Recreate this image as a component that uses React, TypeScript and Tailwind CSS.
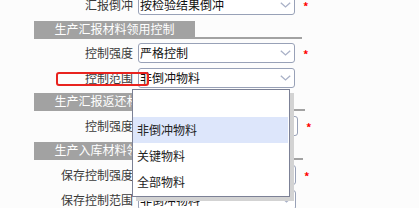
import React from 'react';

type RowProps = {
  label: string;
  value?: string;
  star?: boolean;
  selectWidth?: string;
  starGap?: string;
  className?: string;
};

const Chevron = () => (
  <svg width="11" height="6" viewBox="0 0 11 6" className="mr-[3px] shrink-0">
    <path d="M0.8 0.8 L5.5 5 L10.2 0.8" fill="none" stroke="#a9b1c7" strokeWidth="1.3" />
  </svg>
);

const FieldRow: React.FC<RowProps> = ({ label, value = '', star, selectWidth = 'w-[157px]', starGap = 'ml-[8px]', className = '' }) => (
  <div className={`flex items-center h-[20px] ${className}`}>
    <div className="w-[99px] shrink-0 text-right text-[12px] leading-none text-[#3a3a3a] whitespace-nowrap">{label}</div>
    <div
      className={`ml-[5px] ${selectWidth} h-[20px] shrink-0 flex items-center justify-between bg-white border border-[#98a1b7] rounded-[3px] pl-[1px]`}
    >
      <span className="text-[12px] leading-none text-[#111] whitespace-nowrap overflow-hidden">{value}</span>
      <Chevron />
    </div>
    {star && <span className={`${starGap} text-[11px] font-bold leading-none text-[#ff0000] pt-[3px]`}>*</span>}
  </div>
);

const SectionHeader: React.FC<{ title: string; lineWidth: string; className?: string }> = ({ title, lineWidth, className = '' }) => (
  <div className={`${lineWidth} border-b-2 border-[#a2a2a2] ${className}`}>
    <div className="w-[161px] h-[16px] bg-[#a2a2a2] flex items-center justify-center text-[12px] leading-none text-white whitespace-nowrap overflow-hidden">
      {title}
    </div>
  </div>
);

const options = ['', '非倒冲物料', '关键物料', '全部物料'];

export default function App() {
  return (
    <div className="relative w-[419px] h-[208px] overflow-hidden bg-[#fcfcfc] font-['Noto_Sans_CJK_SC','Noto_Sans',sans-serif]">
      <div className="flex flex-col pl-[34px]">
        <FieldRow label="汇报倒冲" value="按检验结果倒冲" star className="mt-[-5px]" />
        <SectionHeader title="生产汇报材料领用控制" lineWidth="w-[268px]" className="mt-[6px]" />
        <FieldRow label="控制强度" value="严格控制" star className="mt-[4px]" />
        <FieldRow label="控制范围" value="非倒冲物料" className="mt-[5px]" />
        <SectionHeader title="生产汇报返还材料控制" lineWidth="w-[271px]" className="mt-[5px]" />
        <FieldRow label="控制强度" value="严格控制" star selectWidth="w-[160px]" starGap="ml-[8px]" className="mt-[5px]" />
        <SectionHeader title="生产入库材料领用控制" lineWidth="w-[269px]" className="mt-[6px]" />
        <FieldRow label="保存控制强度" value="严格控制" star selectWidth="w-[158px]" starGap="ml-[8px]" className="mt-[5px]" />
        <FieldRow label="保存控制范围" value="非倒冲物料" selectWidth="w-[158px]" className="mt-[5px]" />
      </div>

      {/* red highlight */}
      <div className="absolute left-[56px] top-[72px] w-[93px] h-[14px] border-2 border-[#e8231f] rounded-[3px]" />

      {/* open dropdown */}
      <div className="absolute left-[132px] top-[89px] w-[158px] h-[108px] bg-white border border-[#7c8196] shadow-[4px_4px_0_#d3d3d3] flex flex-col">
        {options.map((o, i) => (
          <div
            key={i}
            className={`h-[26px] shrink-0 flex items-center pl-[4px] text-[12px] leading-none text-[#222] ${
              i === 1 ? 'bg-[#dde6fb] mr-[1px]' : ''
            } ${i === 0 ? 'h-[27px]' : ''}`}
          >
            {o}
          </div>
        ))}
      </div>
    </div>
  );
}
